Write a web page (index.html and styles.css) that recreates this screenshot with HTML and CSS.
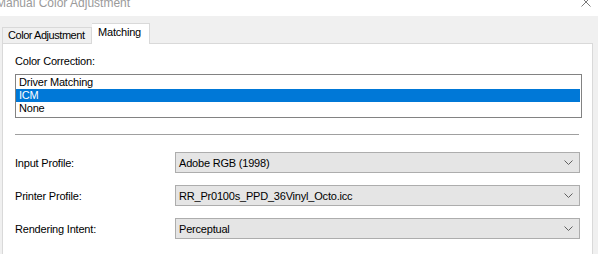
FILE: index.html
```html
<!DOCTYPE html>
<html lang="en">
<head>
    <meta charset="UTF-8">
    <meta name="viewport" content="width=device-width, initial-scale=1.0">
    <title>Manual Color Adjustment</title>
    <link rel="stylesheet" href="styles.css">
</head>
<body>
    <div class="titlebar">
        <span class="title">Manual Color Adjustment</span>
        <svg class="close" width="10" height="10" viewBox="0 0 10 10">
            <path d="M0.5 0.5 L9.5 9.5 M9.5 0.5 L0.5 9.5" stroke="#7a7a7a" stroke-width="1" fill="none"/>
        </svg>
    </div>

    <div class="tabs">
        <div class="tab">Color Adjustment</div>
        <div class="tab active">Matching</div>
    </div>

    <div class="panel">
        <div class="label">Color Correction:</div>
        <div class="listbox">
            <div class="item">Driver Matching</div>
            <div class="item selected">ICM</div>
            <div class="item">None</div>
        </div>

        <div class="separator"></div>

        <div class="form">
            <div class="row">
                <div class="row-label">Input Profile:</div>
                <div class="combo">
                    <span>Adobe RGB (1998)</span>
                    <svg class="chevron" width="9" height="5" viewBox="0 0 9 5">
                        <path d="M0.5 0.5 L4.5 4.5 L8.5 0.5" stroke="#606060" fill="none"/>
                    </svg>
                </div>
            </div>
            <div class="row">
                <div class="row-label">Printer Profile:</div>
                <div class="combo">
                    <span>RR_Pr0100s_PPD_36Vinyl_Octo.icc</span>
                    <svg class="chevron" width="9" height="5" viewBox="0 0 9 5">
                        <path d="M0.5 0.5 L4.5 4.5 L8.5 0.5" stroke="#606060" fill="none"/>
                    </svg>
                </div>
            </div>
            <div class="row">
                <div class="row-label">Rendering Intent:</div>
                <div class="combo">
                    <span>Perceptual</span>
                    <svg class="chevron" width="9" height="5" viewBox="0 0 9 5">
                        <path d="M0.5 0.5 L4.5 4.5 L8.5 0.5" stroke="#606060" fill="none"/>
                    </svg>
                </div>
            </div>
        </div>
    </div>
</body>
</html>
```

FILE: styles.css
```css
html, body {
    height: 100%;
}
body {
    margin: 0;
    background-color: #f0f0f0;
    font-family: "Liberation Sans", Arial, sans-serif;
    font-size: 11px;
    letter-spacing: -0.2px;
    color: #000;
    overflow: hidden;
    display: flex;
    flex-direction: column;
}
.titlebar {
    height: 16px;
    flex-shrink: 0;
    background-color: #fff;
    overflow: hidden;
    display: flex;
    justify-content: space-between;
    align-items: flex-start;
}
.title {
    font-size: 12px;
    line-height: 12px;
    letter-spacing: 0;
    color: #9a9a9a;
    margin-top: -3px;
    margin-left: -4px;
    white-space: nowrap;
}
.close {
    margin-top: -3px;
    margin-right: 7px;
}
.tabs {
    height: 27px;
    flex-shrink: 0;
    display: flex;
    align-items: flex-end;
    padding-left: 2px;
}
.tab {
    box-sizing: border-box;
    width: 90px;
    height: 16px;
    padding-left: 5px;
    line-height: 15px;
    letter-spacing: -0.45px;
    white-space: nowrap;
    background-color: #f0f0f0;
    border: 1px solid #d9d9d9;
    border-bottom: none;
}
.tab.active {
    width: 58px;
    height: 21px;
    line-height: 17px;
    padding-left: 6px;
    letter-spacing: -0.2px;
    background-color: #fff;
    border-left: none;
    margin-bottom: -1px;
    position: relative;
    z-index: 1;
}
.panel {
    flex: 1;
    margin: 0 5px 0 2px;
    padding: 11px 10px 0 12px;
    background-color: #fff;
    border: 1px solid #d9d9d9;
    border-bottom: none;
}
.label {
    line-height: 13px;
}
.listbox {
    margin-top: 6px;
    padding: 1px 1px 2px 0;
    border: 1px solid #828282;
}
.item {
    height: 13px;
    line-height: 13px;
    padding-left: 3px;
}
.item.selected {
    background-color: #0078d7;
    color: #fff;
}
.separator {
    height: 1px;
    margin: 16px 3px 0 0;
    background-color: #a0a0a0;
}
.form {
    margin-top: 17px;
    display: flex;
    flex-direction: column;
    gap: 12px;
}
.row {
    display: flex;
    align-items: center;
}
.row-label {
    width: 160px;
}
.combo {
    flex: 1;
    box-sizing: border-box;
    height: 21px;
    margin-right: 2px;
    padding: 0 6px 0 3px;
    background-color: #e5e5e5;
    border: 1px solid #adadad;
    display: flex;
    align-items: center;
    justify-content: space-between;
}
```
